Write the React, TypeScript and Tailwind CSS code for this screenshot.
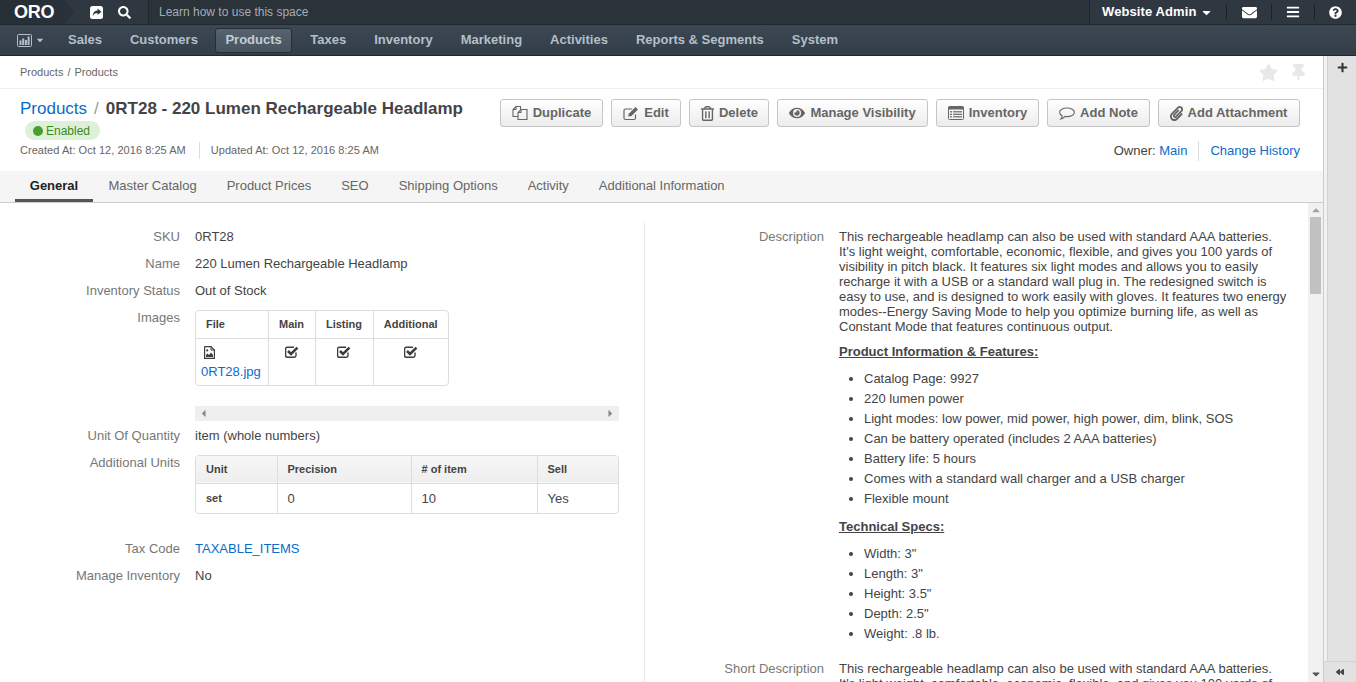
import React from 'react';
import {
  FaBackward,
  FaBars,
  FaCaretDown,
  FaCaretLeft,
  FaCaretRight,
  FaCaretUp,
  FaEnvelope,
  FaEye,
  FaPaperclip,
  FaPlus,
  FaQuestionCircle,
  FaRegTrashAlt,
  FaSearch,
  FaStar,
  FaThumbtack,
} from 'react-icons/fa';

const navItems = ['Sales', 'Customers', 'Products', 'Taxes', 'Inventory', 'Marketing', 'Activities', 'Reports & Segments', 'System'];
const tabs = ['General', 'Master Catalog', 'Product Prices', 'SEO', 'Shipping Options', 'Activity', 'Additional Information'];
const features = [
  'Catalog Page: 9927',
  '220 lumen power',
  'Light modes: low power, mid power, high power, dim, blink, SOS',
  'Can be battery operated (includes 2 AAA batteries)',
  'Battery life: 5 hours',
  'Comes with a standard wall charger and a USB charger',
  'Flexible mount',
];
const specs = ['Width: 3"', 'Length: 3"', 'Height: 3.5"', 'Depth: 2.5"', 'Weight: .8 lb.'];

function ShareIcon() {
  return (
    <svg width="13" height="13" viewBox="0 0 13 13">
      <rect width="13" height="13" rx="2.5" fill="currentColor" />
      <path d="M7.5 2.5L11.5 5.8L7.5 9V7C5.5 7 4 7.6 2.8 10C2.8 6.8 4.6 4.6 7.5 4.5Z" fill="#2f3841" />
    </svg>
  );
}

function ChartIcon() {
  return (
    <svg width="15" height="13" viewBox="0 0 15 13" fill="currentColor">
      <rect x="0.5" y="0.5" width="14" height="12" rx="1" fill="none" stroke="currentColor" />
      <rect x="2.5" y="6.5" width="2" height="4.5" />
      <rect x="5.2" y="4.5" width="2" height="6.5" />
      <rect x="7.9" y="6" width="2" height="5" />
      <rect x="10.6" y="2.5" width="2" height="8.5" />
    </svg>
  );
}

function DuplicateIcon() {
  return (
    <svg width="16" height="16" viewBox="0 0 16 16" fill="none" stroke="currentColor" strokeWidth="1.1">
      <path d="M6 11.5H1V4.5L4 1.5H8.5V4.5" />
      <path d="M4 1.5V4.5H1" />
      <path d="M6 14.5V7.5L9 4.5H15V14.5Z" />
      <path d="M9 4.5V7.5H6" />
    </svg>
  );
}

function EditIcon() {
  return (
    <svg width="16" height="15" viewBox="0 0 16 15" fill="none" stroke="currentColor" strokeWidth="1.2">
      <path d="M12.5 8.5V12C12.5 13 11.8 13.5 11 13.5H2.5C1.5 13.5 1 13 1 12V4.5C1 3.5 1.5 3 2.5 3H9" />
      <path d="M5 10.5L6 7.5L12.5 1L15 3.5L8.5 10L5 10.5Z" fill="currentColor" stroke="none" />
    </svg>
  );
}

function ListIcon() {
  return (
    <svg width="16" height="14" viewBox="0 0 16 14" fill="currentColor">
      <path d="M1.5 0.5H14.5C15.2 0.5 15.5 1 15.5 1.5V12.5C15.5 13 15.2 13.5 14.5 13.5H1.5C0.8 13.5 0.5 13 0.5 12.5V1.5C0.5 1 0.8 0.5 1.5 0.5Z" fill="none" stroke="currentColor" />
      <rect x="0.5" y="0.5" width="15" height="3" />
      <rect x="2" y="5.2" width="2" height="1.2" />
      <rect x="5" y="5.2" width="9" height="1.2" />
      <rect x="2" y="7.7" width="2" height="1.2" />
      <rect x="5" y="7.7" width="9" height="1.2" />
      <rect x="2" y="10.2" width="2" height="1.2" />
      <rect x="5" y="10.2" width="9" height="1.2" />
    </svg>
  );
}

function CommentIcon() {
  return (
    <svg width="16" height="13" viewBox="0 0 16 13" fill="none" stroke="currentColor" strokeWidth="1.1">
      <path d="M8 1C12 1 15.4 2.7 15.4 5.3C15.4 7.9 12 9.6 8 9.6C7.3 9.6 6.6 9.5 6 9.4C5 10.6 3.4 11.8 1.8 12C2.8 11 3.3 9.8 3.2 8.8C1.6 8 0.6 6.8 0.6 5.3C0.6 2.7 4 1 8 1Z" />
    </svg>
  );
}

function FileImageIcon() {
  return (
    <svg width="11" height="13" viewBox="0 0 11 13" className="ml-[3px] text-[#3d3d3d]">
      <path d="M1 0.6H7L10.4 4V12.4H0.6V1Z" fill="none" stroke="currentColor" strokeWidth="1.2" />
      <path d="M7 0.6V4H10.4" fill="none" stroke="currentColor" />
      <circle cx="3.2" cy="4.4" r="1.1" fill="currentColor" />
      <path d="M2 11V9L3.5 7.5L5 9L7 6.5L9 9V11Z" fill="currentColor" />
    </svg>
  );
}

function CheckIcon() {
  return (
    <svg width="14" height="12" viewBox="0 0 14 12" className="mx-auto text-[#3d3d3d]">
      <path d="M11 6.5V9.5C11 10.6 10.4 11.2 9.3 11.2H2.2C1.2 11.2 0.6 10.6 0.6 9.5V2.8C0.6 1.8 1.2 1.2 2.2 1.2H9" fill="none" stroke="currentColor" strokeWidth="1.4" />
      <path d="M3 5L6 8L12.5 1.6" fill="none" stroke="currentColor" strokeWidth="2.6" />
    </svg>
  );
}

const actions = [
  { label: 'Duplicate', icon: <DuplicateIcon />, className: 'w-[103px] gap-[5px]' },
  { label: 'Edit', icon: <EditIcon />, className: 'w-[70px] gap-[5px]' },
  { label: 'Delete', icon: <FaRegTrashAlt className="text-[15px]" />, className: 'w-[80px] gap-[4px]' },
  { label: 'Manage Visibility', icon: <FaEye className="text-[16px]" />, className: 'w-[151px] gap-[5px]' },
  { label: 'Inventory', icon: <ListIcon />, className: 'w-[103px] gap-[5px]' },
  { label: 'Add Note', icon: <CommentIcon />, className: 'w-[103px] gap-[5px]' },
  { label: 'Add Attachment', icon: <FaPaperclip className="text-[15px]" />, className: 'w-[142px] gap-[4px] pr-[2px]' },
];

function Row({ label, children, className }: { label: string; children: React.ReactNode; className?: string }) {
  return (
    <div className={`flex ${className ?? 'mb-[12px]'}`}>
      <div className="w-[180px] shrink-0 text-right text-[#777] leading-[15px]">{label}</div>
      <div className="ml-[15px] min-w-0 flex-1 text-[#444] leading-[15px]">{children}</div>
    </div>
  );
}

function Th({ children, className }: { children: React.ReactNode; className?: string }) {
  return <th className={`h-[27px] border-l border-[#ddd] text-[11px] font-bold text-[#444] first:border-l-0 ${className ?? ''}`}>{children}</th>;
}

export default function App() {
  return (
    <div className="flex h-[682px] w-[1356px] flex-col overflow-hidden bg-white font-['Liberation_Sans',Arial,sans-serif] text-[13px]">
      {/* top bar */}
      <div className="flex h-[25px] shrink-0 items-stretch border-b border-[#20272e] bg-[#2f3841] text-white">
        <div className="relative flex w-[73px] items-center bg-gradient-to-r from-[#262e36] to-[#29313a] pl-[14px] text-[18px] font-bold tracking-[-0.2px]">
          ORO
          <div className="absolute left-[64px] top-0 h-[24px] w-[9px] bg-[#2f3841]" />
          <div className="absolute left-[64px] top-0 h-0 w-0 border-y-[12px] border-l-[10px] border-y-transparent border-l-[#29313a]" />
        </div>
        <div className="flex w-[75px] items-center gap-[15px] pl-[17px]">
          <ShareIcon />
          <FaSearch className="text-[13px]" />
        </div>
        <div className="flex flex-1 items-center border-l border-[#1f262c] bg-[#2a323a] pl-[10px] text-[12px] text-[#a5adb4]">
          Learn how to use this space
        </div>
        <div className="flex items-center border-l border-[#1f262c] bg-[#2f3841]">
          <div className="flex w-[136px] items-center pl-[12px] font-bold tracking-[0.1px]">
            Website Admin
            <FaCaretDown className="ml-[4px] text-[13px]" />
          </div>
          <div className="flex h-[16px] w-[45px] items-center justify-center border-l border-[#1c2329]"><FaEnvelope className="text-[15px]" /></div>
          <div className="flex h-[16px] w-[43px] items-center justify-center border-l border-[#1c2329]"><FaBars className="text-[14px]" /></div>
          <div className="flex h-[16px] w-[42px] items-center justify-center border-l border-[#1c2329]"><FaQuestionCircle className="text-[13px]" /></div>
        </div>
      </div>

      {/* main nav */}
      <div className="flex h-[31px] shrink-0 items-center border-b border-[#20272e] bg-gradient-to-b from-[#3b4752] to-[#333e48] pl-[17px] font-bold text-[#b3bfc9]">
        <div className="mr-[9px] flex items-center gap-[3px]">
          <ChartIcon />
          <FaCaretDown className="text-[10px]" />
        </div>
        {navItems.map((item) =>
          item === 'Products' ? (
            <div key={item} className="ml-[3px] mr-[4px] flex h-[25px] items-center rounded-[3px] border border-[#262e35] bg-gradient-to-b from-[#56636f] to-[#47535e] px-[9.5px] text-[#c3ccd4]">
              {item}
            </div>
          ) : (
            <div key={item} className="px-[14px]">{item}</div>
          ),
        )}
      </div>

      <div className="flex min-h-0 flex-1">
        <div className="flex w-[1323px] shrink-0 flex-col">
          {/* breadcrumbs */}
          <div className="flex h-[33px] shrink-0 items-center justify-between border-b border-[#eee] pl-[20px] pr-[16px] text-[11px] text-[#666]">
            <span className="flex gap-[4px]"><span>Products</span><span>/</span><span>Products</span></span>
            <div className="flex items-center gap-[12px] text-[#e8e8e8]">
              <FaStar className="text-[19px]" />
              <FaThumbtack className="text-[17px]" />
            </div>
          </div>

          {/* page header */}
          <div className="flex h-[82px] shrink-0 justify-between pl-[20px] pr-[23px]">
            <div>
              <div className="mt-[9px] flex h-[21px] items-center text-[17px]">
                <span className="text-[#0a6cc9]">Products</span>
                <span className="mx-[7px] text-[#999]">/</span>
                <span className="font-bold text-[#444]">0RT28 - 220 Lumen Rechargeable Headlamp</span>
              </div>
              <div className="ml-[5px] mt-[2px] flex h-[19px] w-[75px] items-center rounded-[10px] bg-[#dff0d8] pl-[8px] pt-[1px] text-[12px] text-[#3c8a1e]">
                <span className="mr-[3px] h-[10px] w-[10px] rounded-full bg-[#4a9e2f]" />
                Enabled
              </div>
              <div className="mt-[3px] flex h-[15px] items-center text-[11px] tracking-[0.04px] text-[#666]">
                <span className="border-r border-[#ddd] pr-[13px]">Created At: Oct 12, 2016 8:25 AM</span>
                <span className="pl-[11px]">Updated At: Oct 12, 2016 8:25 AM</span>
              </div>
            </div>
            <div className="flex flex-col items-end">
              <div className="mt-[10px] flex gap-[8px]">
                {actions.map((a) => (
                  <div
                    key={a.label}
                    className={`flex h-[28px] items-center justify-center rounded-[3px] border border-[#c5c5c5] bg-gradient-to-b from-white to-[#ececec] font-bold text-[#666] ${a.className}`}
                  >
                    {a.icon}
                    {a.label}
                  </div>
                ))}
              </div>
              <div className="mt-[14px] flex items-center text-[#444]">
                <span className="border-r border-[#ddd] pr-[11px]">
                  Owner: <span className="text-[#0a6cc9]">Main</span>
                </span>
                <span className="pl-[11px] text-[#0a6cc9]">Change History</span>
              </div>
            </div>
          </div>

          {/* tabs */}
          <div className="flex h-[32px] shrink-0 items-stretch border-b border-[#ccc] bg-[#f5f5f5] pb-[2px] pl-[15px]">
            {tabs.map((t, i) => (
              <div
                key={t}
                className={
                  i === 0
                    ? '-mb-[2px] mr-[15.5px] flex w-[78px] items-center justify-center border-b-[3px] border-[#555] pt-[2px] font-bold text-[#222]'
                    : 'mr-[30px] flex items-center text-[#666]'
                }
              >
                {t}
              </div>
            ))}
          </div>

          {/* body */}
          <div className="flex min-h-0 flex-1 overflow-hidden">
            <div className="flex min-w-0 flex-1 pt-[20px]">
              <div className="w-[645px] shrink-0 border-r border-[#e8e8e8] pr-[25px] pt-[6px]">
                <Row label="SKU">0RT28</Row>
                <Row label="Name">220 Lumen Rechargeable Headlamp</Row>
                <Row label="Inventory Status">Out of Stock</Row>
                <Row label="Images" className="mb-[0px]">
                  <div className="w-[254px] overflow-hidden rounded-[4px] border border-[#ddd]">
                    <table className="w-full table-fixed border-collapse">
                      <thead>
                        <tr className="border-b border-[#ddd]">
                          <Th className="w-[72px] pl-[10px] text-left">File</Th>
                          <Th className="w-[47px] text-center">Main</Th>
                          <Th className="w-[58px] text-center">Listing</Th>
                          <Th className="text-center">Additional</Th>
                        </tr>
                      </thead>
                      <tbody>
                        <tr className="h-[47px] align-top">
                          <td className="pl-[5px] pt-[7px]">
                            <FileImageIcon />
                            <span className="mt-[5px] block text-[#0a6cc9]">0RT28.jpg</span>
                          </td>
                          <td className="border-l border-[#ddd] pt-[7px]"><CheckIcon /></td>
                          <td className="border-l border-[#ddd] pt-[7px]"><CheckIcon /></td>
                          <td className="border-l border-[#ddd] pt-[7px]"><CheckIcon /></td>
                        </tr>
                      </tbody>
                    </table>
                  </div>
                  <div className="mb-[7px] mt-[20px] flex h-[15px] items-center justify-between bg-[#efefef] px-[3px] text-[11px] text-[#888]">
                    <FaCaretLeft />
                    <FaCaretRight />
                  </div>
                </Row>
                <Row label="Unit Of Quantity">item (whole numbers)</Row>
                <Row label="Additional Units" className="mb-[27px]">
                  <div className="overflow-hidden rounded-[4px] border border-[#ddd]">
                    <table className="w-full table-fixed border-collapse">
                      <thead>
                        <tr className="border-b border-[#ddd] bg-gradient-to-b from-[#f7f7f7] to-[#eeeeee]">
                          <Th className="w-[81px] pl-[10px] text-left">Unit</Th>
                          <Th className="w-[134px] pl-[10px] text-left">Precision</Th>
                          <Th className="w-[126px] pl-[10px] text-left">#&nbsp;of item</Th>
                          <Th className="pl-[10px] text-left">Sell</Th>
                        </tr>
                      </thead>
                      <tbody>
                        <tr className="h-[30px]">
                          <td className="pl-[10px] text-[11px] font-bold">set</td>
                          <td className="border-l border-[#ddd] pl-[10px]">0</td>
                          <td className="border-l border-[#ddd] pl-[10px]">10</td>
                          <td className="border-l border-[#ddd] pl-[10px]">Yes</td>
                        </tr>
                      </tbody>
                    </table>
                  </div>
                </Row>
                <Row label="Tax Code"><span className="text-[#0a6cc9]">TAXABLE_ITEMS</span></Row>
                <Row label="Manage Inventory">No</Row>
              </div>

              <div className="min-w-0 flex-1 pt-[6px]">
                <div className="flex">
                  <div className="w-[179px] shrink-0 text-right leading-[15px] text-[#777]">Description</div>
                  <div className="ml-[15px] w-[450px] shrink-0 leading-[15px] text-[#444]">
                    <p>
                      This rechargeable headlamp can also be used with standard AAA batteries. It's light weight, comfortable, economic, flexible, and gives you 100 yards of visibility in pitch black. It features six light modes and allows you to easily recharge it with a USB or a standard wall plug in. The redesigned switch is easy to use, and is designed to work easily with gloves. It features two energy modes--Energy Saving Mode to help you optimize burning life, as well as Constant Mode that features continuous output.
                    </p>
                    <p className="mt-[10px] font-bold underline">Product Information &amp; Features:</p>
                    <ul className="mb-[10px] mt-[10px] list-disc pl-[25px] leading-[20px]">
                      {features.map((f) => (
                        <li key={f}>{f}</li>
                      ))}
                    </ul>
                    <p className="font-bold underline">Technical Specs:</p>
                    <ul className="mb-[10px] mt-[10px] list-disc pl-[25px] leading-[20px]">
                      {specs.map((s) => (
                        <li key={s}>{s}</li>
                      ))}
                    </ul>
                  </div>
                </div>
                <div className="mt-[7px] flex">
                  <div className="w-[179px] shrink-0 text-right leading-[15px] text-[#777]">Short Description</div>
                  <div className="ml-[15px] w-[450px] shrink-0 leading-[15px] text-[#444]">
                    This rechargeable headlamp can also be used with standard AAA batteries. It's light weight, comfortable, economic, flexible, and gives you 100 yards of visibility in pitch black.
                  </div>
                </div>
              </div>
            </div>

            {/* scrollbar */}
            <div className="flex w-[15px] shrink-0 flex-col items-center bg-[#f1f1f1] text-[#a3a3a3]">
              <FaCaretUp className="mt-[1px] h-[12px] text-[12px]" />
              <div className="mt-[1px] h-[77px] w-[11px] bg-[#c1c1c1]" />
              <div className="flex-1" />
              <FaCaretDown className="mb-[2px] h-[12px] text-[12px] text-[#555]" />
            </div>
          </div>
        </div>

        {/* right sidebar */}
        <div className="flex min-w-0 flex-1 flex-col border-l border-[#ccc] bg-[#f2f2f2] pl-[3px]">
          <div className="flex flex-1 flex-col items-center border-l border-[#d2d2d2] bg-[#e2e2e2] pt-[6px] text-[#333]">
            <FaPlus className="text-[11px]" />
          </div>
          <div className="-ml-[3px] flex h-[21px] items-center justify-center border-t border-[#d2d2d2] bg-[#e2e2e2] text-[8px] text-[#444]">
            <FaBackward />
          </div>
        </div>
      </div>
    </div>
  );
}
